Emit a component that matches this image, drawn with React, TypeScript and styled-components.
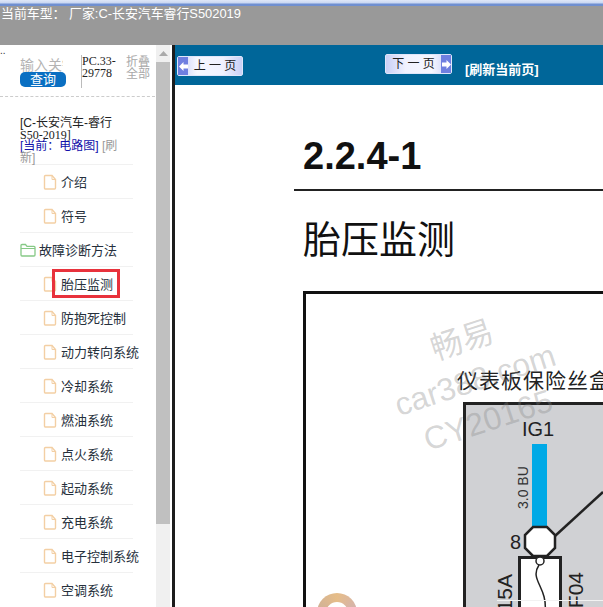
import styled, { createGlobalStyle } from "styled-components";

const GlobalStyle = createGlobalStyle`
  html, body {
    margin: 0;
    padding: 0;
    background: #fff;
    overflow: hidden;
  }
  body {
    font-family: "Liberation Sans", "Noto Sans CJK SC", sans-serif;
  }
`;

const Page = styled.div`
  width: 603px;
  height: 607px;
  display: flex;
  flex-direction: column;
  overflow: hidden;
`;

const TopStrip = styled.div`
  height: 6px;
  flex: none;
  background: linear-gradient(#dfe7f7 0, #c9d7f2 3px, #6f8fd0 4px, #6f8fd0 6px);
`;

const Header = styled.div`
  height: 39px;
  flex: none;
  background: #999;
  color: #fff;
  font-size: 12.9px;
  line-height: 16px;
  padding-left: 1px;
`;

const Body = styled.div`
  flex: 1;
  display: flex;
  min-height: 0;
`;

const Side = styled.div`
  width: 172px;
  flex: none;
  display: flex;
  border-right: 3px solid #1c1c1c;
`;

const SideInner = styled.div`
  width: 155px;
  flex: none;
  overflow: hidden;
  font-size: 12px;
`;

const Dots = styled.div`
  height: 10px;
  font-size: 10px;
  line-height: 12px;
  color: #333;
`;

const SearchRow = styled.div`
  display: flex;
  padding-left: 20px;
  height: 33px;
`;

const SearchCol = styled.div`
  width: 46px;
  flex: none;
`;

const KeyInput = styled.div`
  height: 17px;
  width: 43px;
  overflow: hidden;
  white-space: nowrap;
  color: #b4b4b4;
  font-size: 14px;
  line-height: 21px;
`;

const SearchBtn = styled.div`
  height: 15px;
  border-radius: 5px;
  background: #0a6fc2;
  color: #fff;
  text-align: center;
  font-size: 13px;
  line-height: 15px;
`;

const CountCol = styled.div`
  width: 36px;
  margin-left: 15px;
  border-left: 1px solid #bbb;
  font-family: "Liberation Serif", serif;
  font-size: 12px;
  line-height: 12px;
  color: #222;
  box-sizing: border-box;
  word-break: break-all;
`;

const FoldCol = styled.div`
  width: 26px;
  margin-left: 9px;
  color: #a8a8a8;
  font-size: 12px;
  line-height: 12px;
  padding-top: 1px;
`;

const Dashed = styled.div`
  border-top: 1px dashed #ccc;
  margin-top: 8px;
`;

const ModelInfo = styled.div`
  margin: 21px 0 0 20px;
  width: 112px;
  font-size: 12px;
  line-height: 11.5px;
  color: #222;
`;

const SerifPart = styled.span`
  font-family: "Liberation Serif", serif;
`;

const Current = styled.span`
  color: #1111aa;
`;

const Refresh = styled.span`
  color: #999;
`;

const Tree = styled.ul`
  list-style: none;
  margin: 0 0 0 20px;
  padding: 0;
  width: 113px;
`;

const TreeRow = styled.li<{ $folder?: boolean }>`
  height: 33px;
  border-top: 1px solid #f1f1f1;
  display: flex;
  align-items: center;
  gap: ${(p) => (p.$folder ? "3px" : "4px")};
  padding-left: ${(p) => (p.$folder ? "0" : "23px")};
  font-size: 13px;
  color: #26303c;
  white-space: nowrap;
  svg {
    flex: none;
  }
`;

const Label = styled.span<{ $marked?: boolean }>`
  position: relative;
  ${(p) =>
    p.$marked &&
    `
    &::after {
      content: "";
      position: absolute;
      left: -9px;
      right: -7px;
      top: -5px;
      bottom: -5px;
      border: 3px solid #e8323c;
    }
  `}
`;

const Scrollbar = styled.div`
  width: 14px;
  margin-left: 1px;
  flex: none;
  background: #f0f0f0;
  display: flex;
  flex-direction: column;
`;

const ScrollUp = styled.div`
  height: 17px;
  display: flex;
  justify-content: center;
  padding-top: 6px;
  box-sizing: border-box;
`;

const ScrollThumb = styled.div`
  height: 462px;
  background: #c0c0c0;
`;

const Main = styled.div`
  flex: 1;
  min-width: 0;
  overflow: hidden;
  display: flex;
  flex-direction: column;
`;

const Toolbar = styled.div`
  height: 40px;
  flex: none;
  background: #006699;
  display: flex;
  align-items: flex-start;
  padding-left: 2px;
`;

const PageBtn = styled.div<{ $next?: boolean }>`
  width: ${(p) => (p.$next ? "67px" : "66px")};
  height: 20px;
  margin-top: ${(p) => (p.$next ? "9px" : "11px")};
  margin-left: ${(p) => (p.$next ? "142px" : "0")};
  flex: none;
  display: flex;
  flex-direction: ${(p) => (p.$next ? "row-reverse" : "row")};
  border: 1px solid #dfe6fa;
  border-radius: 2px;
  box-sizing: border-box;
  background: linear-gradient(${(p) => (p.$next ? "270deg" : "90deg")}, #c4ccf8, #f6f7ff 30%, #f0f2ff 70%, #c9d0f6);
  color: #222;
  font-size: 12px;
  line-height: 18px;
`;

const BtnArrow = styled.div`
  width: 10px;
  background: #6f7fe0;
  display: flex;
  align-items: center;
  justify-content: center;
  flex: none;
`;

const BtnText = styled.span`
  flex: 1;
  text-align: center;
  white-space: pre;
`;

const RefreshLink = styled.span`
  margin: 17px 0 0 13px;
  color: #fff;
  font-size: 13px;
  font-weight: bold;
  line-height: 16px;
  white-space: nowrap;
`;

const Doc = styled.div`
  flex: 1;
  position: relative;
  padding-left: 119px;
  overflow: hidden;
`;

const DocCode = styled.h1`
  margin: 49px 0 0 9px;
  font-size: 38px;
  line-height: 44px;
  font-weight: bold;
  color: #111;
`;

const DocRule = styled.div`
  border-top: 2px solid #222;
  margin-top: 11px;
`;

const DocTitle = styled.h2`
  margin: 26px 0 0 9px;
  font-size: 38px;
  line-height: 46px;
  font-weight: normal;
  color: #111;
  white-space: nowrap;
`;

const DiagramFrame = styled.div`
  margin: 28px 0 0 9px;
  width: 400px;
  height: 400px;
  box-sizing: border-box;
  border: 3px solid #111;
  padding: 75px 0 0 151px;
`;

const Caption = styled.div`
  font-family: "Liberation Serif", "Noto Sans CJK SC", serif;
  font-size: 21px;
  line-height: 24px;
  letter-spacing: 1px;
  margin-bottom: 9px;
  white-space: nowrap;
  color: #222;
`;

const DrawingWrap = styled.div`
  margin-left: 6px;
  line-height: 0;
`;

const Watermark = styled.div`
  position: absolute;
  left: 205px;
  top: 232px;
  width: 190px;
  transform: rotate(-18deg);
  text-align: center;
  color: rgba(130, 130, 130, 0.32);
  font-size: 32px;
  line-height: 42px;
  pointer-events: none;
  white-space: nowrap;
`;

const Knob = styled.div`
  position: absolute;
  left: 142px;
  top: 508px;
  width: 40px;
  height: 40px;
  border-radius: 50%;
  background: conic-gradient(#e6bd88, #d2b2b4, #b3a6bd, #cdb09a, #e6bd88);
  &::after {
    content: "";
    position: absolute;
    inset: 9px;
    border-radius: 50%;
    background: #fff;
  }
`;

const menu = ["冷却系统", "燃油系统", "点火系统", "起动系统", "充电系统", "电子控制系统", "空调系统"];

function DocIcon() {
  return (
    <svg width="14" height="16" viewBox="0 0 14 16" fill="none" stroke="#f3cfa4" strokeWidth="1.4">
      <path d="M1.5 2.5a1 1 0 0 1 1-1H9l3.5 4v8.5a1 1 0 0 1-1 1h-9a1 1 0 0 1-1-1z" />
      <path d="M9 1.5v4h3.5" strokeWidth="1" />
    </svg>
  );
}

function FolderIcon() {
  return (
    <svg width="16" height="14" viewBox="0 0 16 14" fill="none" stroke="#86c986" strokeWidth="1.3">
      <path d="M1 2.5a1 1 0 0 1 1-1h3.5l1.5 1.8h7a1 1 0 0 1 1 1V12a1 1 0 0 1-1 1H2a1 1 0 0 1-1-1z" />
      <path d="M1 5.5h14" strokeWidth="1" />
    </svg>
  );
}

function Arrow({ flip }: { flip?: boolean }) {
  return (
    <svg width="9" height="9" viewBox="0 0 9 9" fill="#fff" style={flip ? { transform: "scaleX(-1)" } : undefined}>
      <path d="M0 4.5 4.5 0v2.5H9v4H4.5V9z" />
    </svg>
  );
}

function FuseBoxDrawing() {
  return (
    <svg width="240" height="230" viewBox="0 0 240 230">
      <rect x="1.5" y="1.5" width="300" height="300" fill="#d0d1d4" stroke="#222" strokeWidth="3" />
      <text x="75" y="34" fontFamily="Liberation Sans" fontSize="20" textAnchor="middle" fill="#222">IG1</text>
      <rect x="69" y="42" width="15" height="84" fill="#00a9e6" />
      <text x="65" y="107" fontFamily="Liberation Sans" fontSize="14" fill="#333" transform="rotate(-90 65 107)">3.0 BU</text>
      <path d="M92 134 140 90" stroke="#222" strokeWidth="2.5" />
      <path d="M70 125h14l8 8v13l-8 8H70l-8-8v-13z" fill="#fff" stroke="#222" strokeWidth="2.5" />
      <text x="47" y="147" fontFamily="Liberation Sans" fontSize="20" fill="#222">8</text>
      <rect x="56.5" y="155.5" width="41" height="90" fill="#fff" stroke="#222" strokeWidth="3" />
      <circle cx="77" cy="159" r="4" fill="#fff" stroke="#222" strokeWidth="1.5" />
      <path d="M76 163c-10 15 9 22 6 47" fill="none" stroke="#222" strokeWidth="1.5" />
      <text x="49" y="172" fontFamily="Liberation Sans" fontSize="21" fill="#222" textAnchor="end" transform="rotate(-90 49 172)">15A</text>
      <text x="120" y="170" fontFamily="Liberation Sans" fontSize="21" fill="#222" textAnchor="end" transform="rotate(-90 120 170)">F04</text>
      <path d="M34 198.5H140" stroke="#f2f2f2" strokeWidth="1" />
    </svg>
  );
}

export default function App() {
  return (
    <>
      <GlobalStyle />
      <Page>
        <TopStrip />
        <Header>当前车型： 厂家:C-长安汽车睿行S502019</Header>
        <Body>
          <Side>
            <SideInner>
              <Dots>..</Dots>
              <SearchRow>
                <SearchCol>
                  <KeyInput>输入关键词</KeyInput>
                  <SearchBtn>查询</SearchBtn>
                </SearchCol>
                <CountCol>PC.33-29778</CountCol>
                <FoldCol>折叠全部</FoldCol>
              </SearchRow>
              <Dashed />
              <ModelInfo>
                [C-长安汽车-睿行 <SerifPart>S50-2019]</SerifPart>
                <br />
                <Current>[当前：电路图]</Current> <Refresh>[刷新]</Refresh>
              </ModelInfo>
              <Tree>
                <TreeRow><DocIcon /><Label>介绍</Label></TreeRow>
                <TreeRow><DocIcon /><Label>符号</Label></TreeRow>
                <TreeRow $folder><FolderIcon /><Label>故障诊断方法</Label></TreeRow>
                <TreeRow><DocIcon /><Label $marked>胎压监测</Label></TreeRow>
                <TreeRow><DocIcon /><Label>防抱死控制</Label></TreeRow>
                <TreeRow><DocIcon /><Label>动力转向系统</Label></TreeRow>
                {menu.map((m) => (
                  <TreeRow key={m}><DocIcon /><Label>{m}</Label></TreeRow>
                ))}
              </Tree>
            </SideInner>
            <Scrollbar>
              <ScrollUp>
                <svg width="9" height="5" viewBox="0 0 9 5" fill="#aaa"><path d="M4.5 0 9 5H0z" /></svg>
              </ScrollUp>
              <ScrollThumb />
            </Scrollbar>
          </Side>
          <Main>
            <Toolbar>
              <PageBtn>
                <BtnArrow><Arrow /></BtnArrow>
                <BtnText>上 一 页</BtnText>
              </PageBtn>
              <PageBtn $next>
                <BtnArrow><Arrow flip /></BtnArrow>
                <BtnText>下 一 页</BtnText>
              </PageBtn>
              <RefreshLink>[刷新当前页]</RefreshLink>
            </Toolbar>
            <Doc>
              <DocCode>2.2.4-1</DocCode>
              <DocRule />
              <DocTitle>胎压监测</DocTitle>
              <DiagramFrame>
                <Caption>仪表板保险丝盒</Caption>
                <DrawingWrap>
                  <FuseBoxDrawing />
                </DrawingWrap>
              </DiagramFrame>
              <Watermark>
                畅易
                <br />
                car388.com
                <br />
                CY20165
              </Watermark>
              <Knob />
            </Doc>
          </Main>
        </Body>
      </Page>
    </>
  );
}
